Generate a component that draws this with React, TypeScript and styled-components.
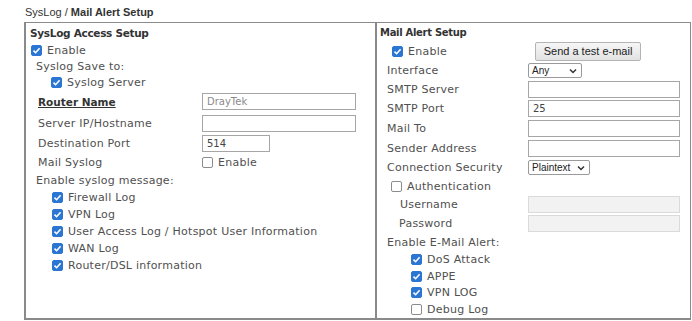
import React from 'react';
import styled, { createGlobalStyle } from 'styled-components';

const Global = createGlobalStyle`
  body {
    margin: 0;
    background: #fff;
    font-family: "DejaVu Sans", Verdana, sans-serif;
  }
`;

const Page = styled.div`
  padding: 4px 1px 0 24px;
  width: 692px;
  box-sizing: border-box;
`;

const Heading = styled.div`
  font-family: "Liberation Sans", Arial, sans-serif;
  font-size: 11px;
  color: #333;
  height: 18px;
  line-height: 16px;
  padding-left: 1px;
  b {
    font-weight: bold;
  }
`;

const Frame = styled.div`
  display: grid;
  grid-template-columns: 351px 1fr;
  border: 1px solid #8a8a8a;
  border-left-width: 2px;
  border-bottom: 2px solid #8a8a8a;
  height: 298px;
  box-sizing: border-box;
`;

const Column = styled.div<{ $divider?: boolean }>`
  display: flex;
  flex-direction: column;
  border-right: ${(p) => (p.$divider ? '2px solid #8a8a8a' : 'none')};
  padding-top: 1px;
`;

const Row = styled.div<{ $h: number; $indent: number; $valueAt?: number }>`
  height: ${(p) => p.$h}px;
  display: grid;
  grid-template-columns: ${(p) => (p.$valueAt ? `${p.$valueAt - p.$indent}px 1fr` : '1fr')};
  align-items: center;
  padding-left: ${(p) => p.$indent}px;
  font-size: 11px;
  letter-spacing: 0.25px;
  color: #505050;
  white-space: nowrap;
`;

const Title = styled.span<{ $size: number }>`
  font-family: "DejaVu Sans", Tahoma, sans-serif;
  font-weight: bold;
  font-size: ${(p) => p.$size}px;
  color: #333;
  letter-spacing: -0.3px;
`;

const Label = styled.span<{ $strong?: boolean }>`
  color: ${(p) => (p.$strong ? '#333' : '#505050')};
  font-weight: ${(p) => (p.$strong ? 'bold' : 'normal')};
  font-size: ${(p) => (p.$strong ? '10.5px' : '11px')};
  letter-spacing: ${(p) => (p.$strong ? '0' : '0.25px')};
  text-decoration: ${(p) => (p.$strong ? 'underline' : 'none')};
`;

const CheckLine = styled.label`
  display: inline-flex;
  align-items: center;
  gap: 5px;
`;

const Box = styled.span<{ $on: boolean }>`
  width: 11px;
  height: 11px;
  box-sizing: border-box;
  border-radius: 2px;
  display: inline-flex;
  align-items: center;
  justify-content: center;
  background: ${(p) => (p.$on ? '#2a76d2' : '#fff')};
  border: 1px solid ${(p) => (p.$on ? '#2a76d2' : '#8c8c8c')};
`;

const Field = styled.div<{ $w: number; $disabled?: boolean }>`
  width: ${(p) => p.$w}px;
  height: 17px;
  box-sizing: border-box;
  border: 1px solid ${(p) => (p.$disabled ? '#dadada' : '#a6a6a6')};
  background: ${(p) => (p.$disabled ? '#f2f2f2' : '#fff')};
  font-size: 10px;
  letter-spacing: 0;
  line-height: 15px;
  padding-left: 4px;
  color: #444;
`;

const Muted = styled.span`
  color: #8a8a8a;
`;

const SelectBox = styled.div<{ $w: number }>`
  width: ${(p) => p.$w}px;
  height: 15px;
  box-sizing: border-box;
  border: 1px solid #9a9a9a;
  border-radius: 2px;
  display: flex;
  align-items: center;
  justify-content: space-between;
  padding: 0 4px 0 3px;
  font-family: "Liberation Sans", Arial, sans-serif;
  font-size: 10px;
  letter-spacing: 0;
  color: #222;
  background: #fff;
`;

const Button = styled.div`
  width: 106px;
  height: 19px;
  box-sizing: border-box;
  margin-left: 7px;
  border: 1px solid #b4b4b4;
  border-radius: 2px;
  background: linear-gradient(#f6f6f6, #e2e2e2);
  font-family: "Liberation Sans", Arial, sans-serif;
  font-size: 11px;
  letter-spacing: 0;
  color: #222;
  display: flex;
  align-items: center;
  justify-content: center;
`;

const Check = ({ on, children }: { on: boolean; children?: React.ReactNode }) => (
  <CheckLine>
    <Box $on={on}>
      {on && (
        <svg width="9" height="9" viewBox="0 0 9 9">
          <path d="M1.5 4.6 L3.6 6.7 L7.6 2.2" stroke="#fff" strokeWidth="1.6" fill="none" />
        </svg>
      )}
    </Box>
    {children}
  </CheckLine>
);

const Chevron = () => (
  <svg width="8" height="6" viewBox="0 0 8 6">
    <path d="M1 1.5 L4 4.5 L7 1.5" stroke="#333" strokeWidth="1.5" fill="none" />
  </svg>
);

const LV = 176;
const RV = 151;

const syslogItems = [
  'Firewall Log',
  'VPN Log',
  'User Access Log / Hotspot User Information',
  'WAN Log',
  'Router/DSL information',
];

const alertItems: [string, boolean, number][] = [
  ['DoS Attack', true, 17],
  ['APPE', true, 16],
  ['VPN LOG', true, 16],
  ['Debug Log', false, 18],
];

export default function App() {
  return (
    <>
      <Global />
      <Page>
        <Heading>
          SysLog / <b>Mail Alert Setup</b>
        </Heading>
        <Frame>
          <Column $divider>
            <Row $h={18} $indent={4}>
              <Title $size={10.5}>SysLog Access Setup</Title>
            </Row>
            <Row $h={16} $indent={5}>
              <Check on>Enable</Check>
            </Row>
            <Row $h={16} $indent={10}>Syslog Save to:</Row>
            <Row $h={17} $indent={25}>
              <Check on>Syslog Server</Check>
            </Row>
            <Row $h={21} $indent={12} $valueAt={LV}>
              <Label $strong>Router Name</Label>
              <Field $w={154}>
                <Muted>DrayTek</Muted>
              </Field>
            </Row>
            <Row $h={22} $indent={12} $valueAt={LV}>
              <Label>Server IP/Hostname</Label>
              <Field $w={154} />
            </Row>
            <Row $h={19} $indent={12} $valueAt={LV}>
              <Label>Destination Port</Label>
              <Field $w={68}>514</Field>
            </Row>
            <Row $h={19} $indent={12} $valueAt={LV}>
              <Label>Mail Syslog</Label>
              <Check on={false}>Enable</Check>
            </Row>
            <Row $h={17} $indent={10}>Enable syslog message:</Row>
            {syslogItems.map((t, i) => (
              <Row key={t} $h={i < 4 ? 17 : 16} $indent={26}>
                <Check on>{t}</Check>
              </Row>
            ))}
          </Column>
          <Column>
            <Row $h={17} $indent={3}>
              <Title $size={10}>Mail Alert Setup</Title>
            </Row>
            <Row $h={20} $indent={15} $valueAt={RV}>
              <Check on>Enable</Check>
              <Button>Send a test e-mail</Button>
            </Row>
            <Row $h={19} $indent={10} $valueAt={RV}>
              <Label>Interface</Label>
              <SelectBox $w={54}>
                Any <Chevron />
              </SelectBox>
            </Row>
            <Row $h={18} $indent={10} $valueAt={RV}>
              <Label>SMTP Server</Label>
              <Field $w={152} />
            </Row>
            <Row $h={20} $indent={10} $valueAt={RV}>
              <Label>SMTP Port</Label>
              <Field $w={152}>25</Field>
            </Row>
            <Row $h={20} $indent={10} $valueAt={RV}>
              <Label>Mail To</Label>
              <Field $w={152} />
            </Row>
            <Row $h={20} $indent={10} $valueAt={RV}>
              <Label>Sender Address</Label>
              <Field $w={152} />
            </Row>
            <Row $h={19} $indent={10} $valueAt={RV}>
              <Label>Connection Security</Label>
              <SelectBox $w={62}>
                Plaintext <Chevron />
              </SelectBox>
            </Row>
            <Row $h={18} $indent={14}>
              <Check on={false}>Authentication</Check>
            </Row>
            <Row $h={19} $indent={23} $valueAt={RV}>
              <Label>Username</Label>
              <Field $w={152} $disabled />
            </Row>
            <Row $h={19} $indent={22} $valueAt={RV}>
              <Label>Password</Label>
              <Field $w={152} $disabled />
            </Row>
            <Row $h={18} $indent={10}>Enable E-Mail Alert:</Row>
            {alertItems.map(([t, on, h]) => (
              <Row key={t} $h={h} $indent={34}>
                <Check on={on}>{t}</Check>
              </Row>
            ))}
          </Column>
        </Frame>
      </Page>
    </>
  );
}
